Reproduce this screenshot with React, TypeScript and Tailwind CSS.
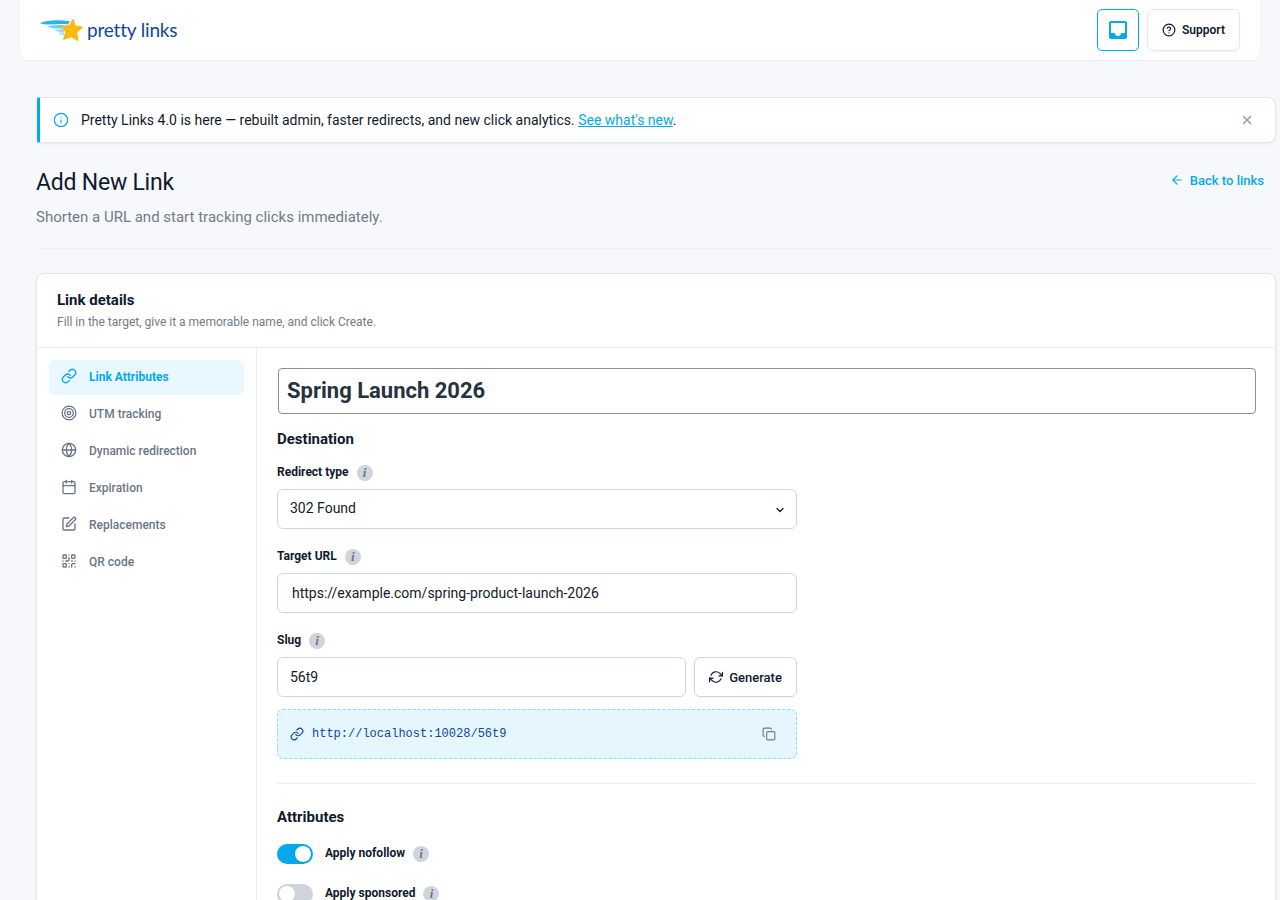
import React from "react";
import {
  ArrowLeft,
  Calendar,
  ChevronDown,
  CircleHelp,
  Copy,
  Globe,
  Info,
  Link,
  QrCode,
  SquarePen,
  X,
} from "lucide-react";
import { FiRefreshCw } from "react-icons/fi";

const navItems = [
  { label: "Link Attributes", icon: LinkIcon, active: true },
  { label: "UTM tracking", icon: TargetIcon },
  { label: "Dynamic redirection", icon: GlobeIcon },
  { label: "Expiration", icon: CalendarIcon },
  { label: "Replacements", icon: EditIcon },
  { label: "QR code", icon: QrIcon },
];

const attributes = [
  { label: "Apply nofollow", on: true },
  { label: "Apply sponsored", on: false },
];

function LinkIcon() {
  return <Link className="size-4" strokeWidth={2} />;
}

function TargetIcon() {
  return (
    <svg viewBox="0 0 16 16" className="size-4" fill="none" stroke="currentColor" strokeWidth="1.3">
      <circle cx="8" cy="8" r="6.9" />
      <circle cx="8" cy="8" r="4.3" />
      <circle cx="8" cy="8" r="1.7" />
    </svg>
  );
}

function GlobeIcon() {
  return <Globe className="size-4" strokeWidth={2} />;
}

function CalendarIcon() {
  return <Calendar className="size-4" strokeWidth={2} />;
}

function EditIcon() {
  return <SquarePen className="size-4" strokeWidth={2} />;
}

function QrIcon() {
  return <QrCode className="size-4" strokeWidth={2} />;
}

function Logo() {
  return (
    <div className="flex items-center">
      <svg viewBox="0 0 44 24" className="h-6 w-11" fill="none">
        <path d="M0 5.300C8 1.800 18 1.800 30 3.200L28 6.600C18 4.800 9 8.400 0 5.300Z" fill="#27b4ec" />
        <path d="M7.500 8.300C13 7.500 18 6.400 25 7.500L23 10.500C17 10 12 11.500 7.500 8.300Z" fill="#6fcdf3" />
        <path d="M14.500 12.100C18 11.800 20 11 24 11.500V14C20 14 17.500 14.300 14.500 12.100Z" fill="#8ed8f6" />
        <path d="M18.500 15.100L24 14V17C21.500 17.500 20 17 18.500 15.100Z" fill="#a9e1f8" />
        <path
          d="M33 2L34.800 8.200L41.800 9.500L36.200 13.800L37.600 22L31.600 18.200L24 21L26.400 13.900L22.300 8.700L29.600 8Z"
          fill="#fdb913"
          stroke="#fdb913"
          strokeWidth="1.800"
          strokeLinejoin="round"
        />
      </svg>
      <span className="ml-[3px] font-['Lato',sans-serif] text-[19px] leading-6 tracking-[-0.18px] text-[#0f47a1]">
        pretty links
      </span>
    </div>
  );
}

function InfoBadge() {
  return (
    <span className="flex size-4 items-center justify-center rounded-full bg-[#d0d5dd] pb-px font-['Liberation_Serif',serif] text-[13px] leading-none font-bold text-[#6b7684] italic">
      i
    </span>
  );
}

function FieldLabel({ children }: { children: React.ReactNode }) {
  return (
    <div className="flex h-4 gap-2">
      <span className="-mt-px text-[12px] leading-4 font-bold">{children}</span>
      <InfoBadge />
    </div>
  );
}

export default function App() {
  return (
    <div className="h-[900px] w-[1280px] overflow-hidden bg-[#f6f8fc] font-['Roboto',sans-serif] text-[#0f1a2e]">
      <header className="mx-5 flex h-[60px] items-center justify-between rounded-b-lg bg-white px-5 shadow-[0_1px_2px_rgba(16,24,40,0.06)]">
        <Logo />
        <div className="flex gap-2">
          <button className="flex size-[42px] items-center justify-center rounded-[5px] border border-[#03aaeb] text-[#03aaeb]">
            <svg viewBox="0 0 18 18" className="size-[18px]">
              <path
                fill="currentColor"
                fillRule="evenodd"
                d="M2 0H16A2 2 0 0 1 18 2V16A2 2 0 0 1 16 18H2A2 2 0 0 1 0 16V2A2 2 0 0 1 2 0ZM2 2V12H5.500C6.200 13.800 7.400 15 9 15S11.800 13.800 12.500 12H16V2Z"
              />
            </svg>
          </button>
          <button className="flex h-[42px] w-[93px] items-center justify-center gap-1.5 rounded-md border border-[#e4e7ec] text-[12px] font-semibold shadow-[0_1px_2px_rgba(16,24,40,0.05)]">
            <CircleHelp className="size-[14px]" strokeWidth={2} />
            Support
          </button>
        </div>
      </header>

      <main className="mt-[37px] ml-9 w-[1240px]">
        <div className="ml-px flex h-[46px] items-center rounded-l-[2px] rounded-r-lg border border-l-[3px] border-[#e1e6ed] border-l-[#03aaeb] bg-white pr-[21px] pl-[13px] shadow-[0_1px_2px_rgba(16,24,40,0.05)]">
          <Info className="size-4 text-[#03aaeb]" strokeWidth={1.8} />
          <p className="ml-3 flex-1 text-[14px] tracking-[-0.004px]">
            Pretty Links 4.0 is here — rebuilt admin, faster redirects, and new click analytics.{" "}
            <a className="text-[#03aaeb] underline">See what's new</a>.
          </p>
          <X className="size-[14px] text-[#8f96a3]" strokeWidth={2.2} />
        </div>

        <div className="flex h-[106px] justify-between border-b border-[#eceef2] pt-[22px] pr-3">
          <div>
            <h1 className="mt-0.5 text-[23px] leading-8 font-normal tracking-[-0.23px]">Add New Link</h1>
            <p className="mt-1.5 text-[15px] leading-6 text-[#737b88]">
              Shorten a URL and start tracking clicks immediately.
            </p>
          </div>
          <a className="flex h-8 items-center gap-1.5 text-[13px] font-medium text-[#03aaeb]">
            <ArrowLeft className="-mt-0.5 size-[14px]" strokeWidth={2} />
            Back to links
          </a>
        </div>

        <section className="mt-6 h-[700px] rounded-lg border border-[#e1e6ed] bg-white shadow-[0_1px_3px_rgba(16,24,40,0.08)]">
          <div className="h-[74px] border-b border-[#eaecf0] px-5 pt-4">
            <h2 className="text-[15px] leading-5 font-bold">Link details</h2>
            <p className="mt-1 text-[12px] leading-4 text-[#737b88]">
              Fill in the target, give it a memorable name, and click Create.
            </p>
          </div>

          <div className="flex h-[626px]">
            <nav className="flex w-[220px] shrink-0 flex-col gap-0.5 border-r border-[#eaecf0] p-3">
              {navItems.map((item) => (
                <a
                  key={item.label}
                  className={
                    item.active
                      ? "flex h-[35px] items-center gap-3 rounded-md bg-[#e9f7fe] px-3 pb-0.5 text-[12px] font-bold text-[#03aaeb]"
                      : "flex h-[35px] items-center gap-3 px-3 pb-0.5 text-[12px] font-medium text-[#6b7684]"
                  }
                >
                  <span className="-mt-px">
                    <item.icon />
                  </span>
                  {item.label}
                </a>
              ))}
            </nav>

            <div className="flex-1 p-5">
              <div className="ml-px flex h-[46px] w-[978px] items-center rounded-[4px] border border-[#8c8f94] px-2 pb-0.5 text-[22px] font-bold text-[#28323f]">
                Spring Launch 2026
              </div>
              <h3 className="mt-[15px] text-[15px] leading-5 font-bold">Destination</h3>

              <div className="mt-4 w-[520px]">
                <FieldLabel>Redirect type</FieldLabel>
                <div className="mt-2 flex h-10 items-center justify-between rounded-md border border-[#d0d5dd] pr-2.5 pl-3 text-[14px]">
                  <span className="-mt-0.5">302 Found</span>
                  <ChevronDown className="mt-0.5 size-3" strokeWidth={2.6} />
                </div>
              </div>

              <div className="mt-5 w-[520px]">
                <FieldLabel>Target URL</FieldLabel>
                <div className="mt-2 flex h-10 items-center rounded-md border border-[#d0d5dd] px-3.5 text-[14px]">
                  https://example.com/spring-product-launch-2026
                </div>
              </div>

              <div className="mt-5 w-[520px]">
                <FieldLabel>Slug</FieldLabel>
                <div className="mt-2 flex gap-2">
                  <div className="flex h-10 flex-1 items-center rounded-md border border-[#d0d5dd] px-3 text-[14px]">
                    56t9
                  </div>
                  <button className="flex h-10 w-[103px] items-center justify-center gap-1.5 rounded-md border border-[#d0d5dd] text-[13px] font-medium shadow-[0_1px_2px_rgba(16,24,40,0.05)]">
                    <FiRefreshCw className="size-[14px]" />
                    <span className="pt-px">Generate</span>
                  </button>
                </div>
                <div className="mt-3 flex h-[50px] items-center rounded-md border border-dashed border-[#8bdcf8] bg-[#e5f6fe] pr-5 pl-3">
                  <Link className="size-[14px] text-[#0f47a1]" strokeWidth={2} />
                  <span className="ml-2 flex-1 font-['Liberation_Mono',monospace] text-[12px] text-[#0f47a1]">
                    http://localhost:10028/56t9
                  </span>
                  <Copy className="size-[14px] text-[#737b88]" strokeWidth={2} />
                </div>
              </div>

              <div className="mt-6 w-[978px] border-t border-[#eceef2] pt-[23px]">
                <h3 className="text-[15px] leading-5 font-bold">Attributes</h3>
                <div className="mt-[17px] flex flex-col gap-5">
                  {attributes.map((attr) => (
                    <div key={attr.label} className="flex h-5 items-center gap-3">
                      <span
                        className={
                          attr.on
                            ? "flex h-5 w-9 items-center justify-end rounded-full bg-[#03aaeb] p-0.5"
                            : "flex h-5 w-9 items-center rounded-full bg-[#d0d5dd] p-0.5"
                        }
                      >
                        <span className="size-4 rounded-full bg-white shadow-sm" />
                      </span>
                      <FieldLabel>{attr.label}</FieldLabel>
                    </div>
                  ))}
                </div>
              </div>
            </div>
          </div>
        </section>
      </main>
    </div>
  );
}
